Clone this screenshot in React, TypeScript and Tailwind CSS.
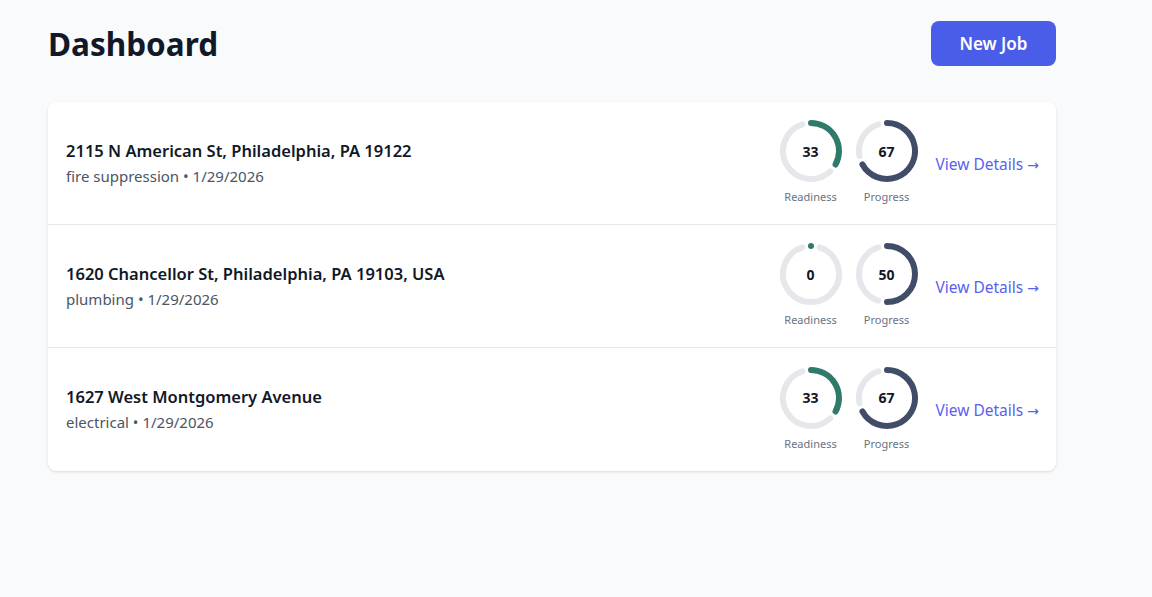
import React from 'react';

type Job = {
  id: number;
  address: string;
  trade: string;
  date: string;
  readiness: number;
  progress: number;
};

const jobs: Job[] = [
  { id: 1, address: '2115 N American St, Philadelphia, PA 19122', trade: 'fire suppression', date: '1/29/2026', readiness: 33, progress: 67 },
  { id: 2, address: '1620 Chancellor St, Philadelphia, PA 19103, USA', trade: 'plumbing', date: '1/29/2026', readiness: 0, progress: 50 },
  { id: 3, address: '1627 West Montgomery Avenue', trade: 'electrical', date: '1/29/2026', readiness: 33, progress: 67 },
];

const arcPath = (cx: number, cy: number, r: number, start: number, end: number) => {
  const toXY = (deg: number) => {
    const rad = ((deg - 90) * Math.PI) / 180;
    return [cx + r * Math.cos(rad), cy + r * Math.sin(rad)];
  };
  const [x1, y1] = toXY(start);
  const [x2, y2] = toXY(end);
  const large = end - start > 180 ? 1 : 0;
  return `M ${x1} ${y1} A ${r} ${r} 0 ${large} 1 ${x2} ${y2}`;
};

const Ring = ({ value, color, label }: { value: number; color: string; label: string }) => {
  const gap = 18;
  const deg = (value / 100) * 360;
  return (
    <div className="flex flex-col items-center w-16">
      <div className="relative w-16 h-16">
        <svg width="64" height="64" viewBox="0 0 64 64">
          <path d={arcPath(32, 32, 28, deg + gap, 360 - gap)} fill="none" stroke="#e5e7eb" strokeWidth="6" strokeLinecap="round" />
          {value === 0 ? (
            <circle cx="32" cy="4" r="3" fill={color} />
          ) : (
            <path d={arcPath(32, 32, 28, 0, deg)} fill="none" stroke={color} strokeWidth="6" strokeLinecap="round" />
          )}
        </svg>
        <span className="absolute inset-0 flex items-center justify-center text-[14px] font-bold text-gray-900">{value}</span>
      </div>
      <span className="mt-[8px] text-[11px] text-gray-500 leading-none">{label}</span>
    </div>
  );
};

export default function App() {
  return (
    <div className="min-h-screen bg-[#f9fafb] font-['Noto_Sans',sans-serif]">
      <div className="max-w-[1056px] pl-12 pt-[21px]">
        <div className="flex items-center justify-between">
          <h1 className="text-[31.5px] font-bold text-[#111827] leading-none">Dashboard</h1>
          <button className="h-[45px] w-[125px] rounded-lg bg-[#4a5de8] text-white text-[17px] font-semibold">New Job</button>
        </div>

        <div className="mt-9 bg-white rounded-lg shadow-sm divide-y divide-gray-200">
          {jobs.map((job) => (
            <div key={job.id} className="h-[123px] flex items-center justify-between pl-[18px] pr-[17px]">
              <div>
                <div className="text-[16.5px] font-semibold text-[#111827]">{job.address}</div>
                <div className="text-[15px] text-gray-600 mt-[1px]">
                  {job.trade} • {job.date}
                </div>
              </div>
              <div className="flex items-center gap-3">
                <div className="flex gap-3 mb-[5px]">
                  <Ring value={job.readiness} color="#2f7a6a" label="Readiness" />
                  <Ring value={job.progress} color="#414c69" label="Progress" />
                </div>
                <a href="#" className="ml-[5px] mt-[3px] text-[15.5px] text-[#5b5ff0]">
                  View Details <span className="font-['DejaVu_Sans',sans-serif] text-[14px]">→</span>
                </a>
              </div>
            </div>
          ))}
        </div>
      </div>
    </div>
  );
}
